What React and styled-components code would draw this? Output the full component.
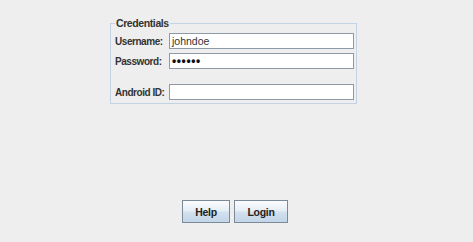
import React from "react";
import styled, { createGlobalStyle } from "styled-components";

const GlobalStyle = createGlobalStyle`
  html, body {
    margin: 0;
    padding: 0;
    background: #eeeeee;
  }
  body {
    font-family: "Liberation Sans", Arial, sans-serif;
  }
`;

const Window = styled.div`
  width: 473px;
  height: 242px;
  box-sizing: border-box;
  display: flex;
  flex-direction: column;
  padding: 17px 0 19px 110px;
  background: #eeeeee;
`;

const Group = styled.fieldset`
  width: 247px;
  box-sizing: border-box;
  margin: 0;
  padding: 4px 2px 3px 4px;
  border: 1px solid #c3d3e3;
  min-width: 0;
`;

const Title = styled.legend`
  padding: 0 1px;
  margin: 0;
  font-size: 10.5px;
  line-height: 12px;
  font-weight: bold;
  letter-spacing: -0.4px;
  color: #333333;
`;

const Form = styled.div`
  display: grid;
  grid-template-columns: 54px 185px;
  row-gap: 4px;
  align-items: center;
`;

const Label = styled.label`
  font-size: 10px;
  font-weight: bold;
  letter-spacing: -0.45px;
  color: #333333;
  white-space: nowrap;
  margin-top: ${(p) => (p.$spaced ? "11px" : "0")};
`;

const Field = styled.div`
  height: 16px;
  box-sizing: border-box;
  border: 1px solid #8d9aa8;
  background: #ffffff;
  padding: 0 2px;
  font-size: 10.5px;
  line-height: 14px;
  color: #333333;
  margin-top: ${(p) => (p.$spaced ? "11px" : "0")};
`;

const Dots = styled.span`
  font-size: 12px;
  font-weight: bold;
  letter-spacing: 0.6px;
  color: #111111;
`;

const Spacer = styled.div`
  flex: 1;
`;

const Buttons = styled.div`
  display: flex;
  gap: 4px;
  margin-left: 72px;
`;

const Button = styled.button`
  height: 23px;
  width: ${(p) => p.$w}px;
  box-sizing: border-box;
  padding: 0;
  border: 1px solid #7a8a99;
  background: linear-gradient(#fbfcfe, #e6eef6 45%, #d2e0ee 55%, #c3d5e7);
  font-family: "Liberation Sans", Arial, sans-serif;
  font-size: 10.5px;
  font-weight: bold;
  letter-spacing: -0.3px;
  color: #222222;
`;

export default function App() {
  return (
    <>
      <GlobalStyle />
      <Window>
        <Group>
          <Title>Credentials</Title>
          <Form>
            <Label>Username:</Label>
            <Field>johndoe</Field>
            <Label>Password:</Label>
            <Field>
              <Dots>••••••</Dots>
            </Field>
            <Label $spaced>Android ID:</Label>
            <Field $spaced />
          </Form>
        </Group>
        <Spacer />
        <Buttons>
          <Button $w={48}>Help</Button>
          <Button $w={54}>Login</Button>
        </Buttons>
      </Window>
    </>
  );
}
